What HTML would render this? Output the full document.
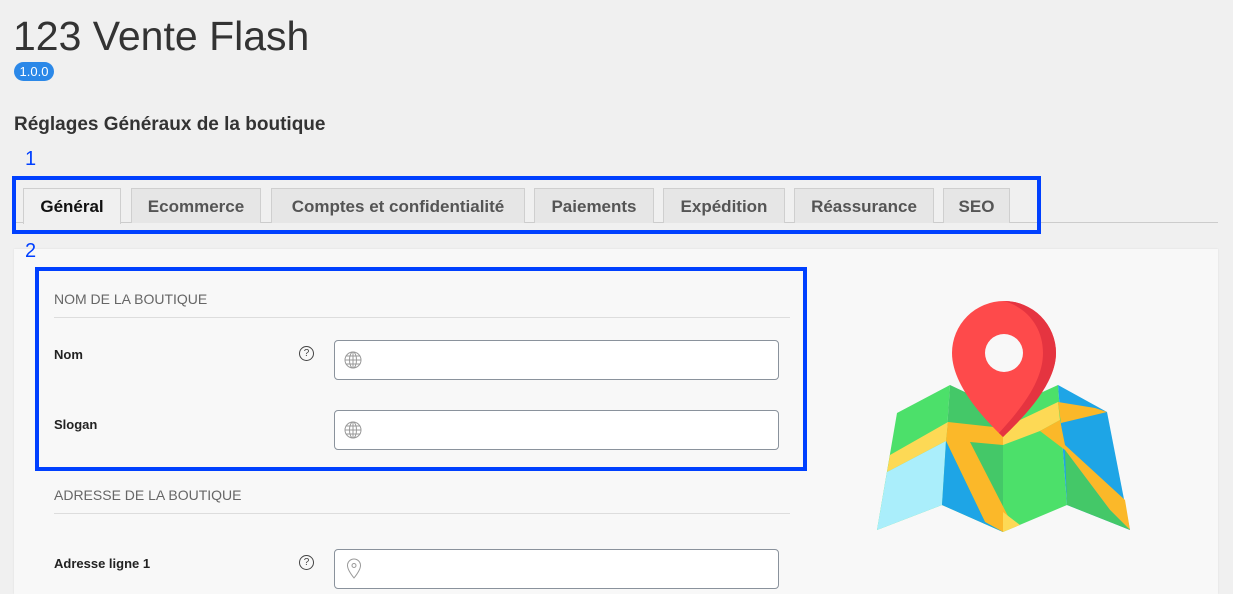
<!DOCTYPE html>
<html><head><meta charset="utf-8"><style>
*{margin:0;padding:0;box-sizing:border-box}
body{width:1233px;height:594px;overflow:hidden;background:#f0f0f0;font-family:"Liberation Sans",Helvetica,Arial,sans-serif;position:relative;color:#333}
.a{position:absolute;white-space:nowrap}
.tab{position:absolute;top:188px;height:35px;background:#e6e6e6;border:1px solid #cfcfcf;border-bottom:none;font-size:17px;font-weight:bold;color:#555;text-align:center;line-height:35px}
.inp{position:absolute;left:334px;width:445px;height:40px;background:#fff;border:1px solid #8a929c;border-radius:4px}
.lbl{position:absolute;left:54px;font-size:13px;font-weight:bold;color:#222}
.sec{position:absolute;left:54px;font-size:14px;color:#666}
.hr{position:absolute;left:54px;width:736px;height:1px;background:#ddd}
.q{position:absolute;left:299px;width:15px;height:15px;border:1px solid #444;border-radius:50%;font-size:10px;text-align:center;line-height:13px;color:#444}
</style></head><body>
<div class="a" style="left:13px;top:13px;font-size:41px;color:#333">123 Vente Flash</div>
<div class="a" style="left:14px;top:62px;width:40px;height:19px;background:#2b88e8;border-radius:10px;color:#fff;font-size:13px;line-height:19px;text-align:center">1.0.0</div>
<div class="a" style="left:14px;top:114px;font-size:19px;font-weight:bold;color:#333">Réglages Généraux de la boutique</div>
<div class="a" style="left:25px;top:148px;font-size:20px;color:#0040ff">1</div>

<div class="a" style="left:14px;top:222px;width:1204px;height:1px;background:#ccc"></div>
<div class="tab" style="left:23px;width:98px;background:#f0f0f0;color:#111;height:36px">Général</div>
<div class="tab" style="left:131px;width:130px">Ecommerce</div>
<div class="tab" style="left:271px;width:254px">Comptes et confidentialité</div>
<div class="tab" style="left:534px;width:120px">Paiements</div>
<div class="tab" style="left:663px;width:122px">Expédition</div>
<div class="tab" style="left:794px;width:140px">Réassurance</div>
<div class="tab" style="left:943px;width:67px">SEO</div>
<div class="a" style="left:12px;top:176px;width:1029px;height:58px;border:4px solid #0040ff"></div>

<div class="a" style="left:14px;top:249px;width:1204px;height:345px;background:#f8f8f8;box-shadow:0 0 2px rgba(0,0,0,.08)"></div>
<div class="a" style="left:25px;top:240px;font-size:20px;color:#0040ff">2</div>

<div class="sec" style="top:291px">NOM DE LA BOUTIQUE</div>
<div class="hr" style="top:317px"></div>
<div class="lbl" style="top:347px">Nom</div>
<div class="q" style="top:346px">?</div>
<div class="inp" style="top:340px"></div>
<div class="lbl" style="top:417px">Slogan</div>
<div class="inp" style="top:410px"></div>
<div class="sec" style="top:487px">ADRESSE DE LA BOUTIQUE</div>
<div class="hr" style="top:513px"></div>
<div class="lbl" style="top:556px">Adresse ligne 1</div>
<div class="q" style="top:555px">?</div>
<div class="inp" style="top:549px"></div>

<svg class="a" style="left:344px;top:351px" width="18" height="18" viewBox="0 0 18 18" fill="none" stroke="#999" stroke-width="1"><circle cx="9" cy="9" r="8"/><ellipse cx="9" cy="9" rx="3.5" ry="8"/><path d="M1 9h16M2.5 5h13M2.5 13h13M9 1v16"/></svg>
<svg class="a" style="left:344px;top:421px" width="18" height="18" viewBox="0 0 18 18" fill="none" stroke="#999" stroke-width="1"><circle cx="9" cy="9" r="8"/><ellipse cx="9" cy="9" rx="3.5" ry="8"/><path d="M1 9h16M2.5 5h13M2.5 13h13M9 1v16"/></svg>
<svg class="a" style="left:346px;top:558px" width="16" height="22" viewBox="0 0 16 22" fill="none" stroke="#999" stroke-width="1"><path d="M8 20C4 15 1.5 11 1.5 7.5a6.5 6.5 0 0 1 13 0C14.5 11 12 15 8 20z"/><circle cx="8" cy="7.5" r="2"/></svg>

<div class="a" style="left:35px;top:267px;width:772px;height:204px;border:4px solid #0040ff"></div>

<svg class="a" style="left:860px;top:290px" width="290" height="250" viewBox="0 0 290 250">
<polygon points="37,123 90,95 82,215 17,240" fill="#4ce06a"/>
<polygon points="90,95 143,120 143,242 82,215" fill="#44c868"/>
<polygon points="143,120 198,95 207,215 143,242" fill="#4ce06a"/>
<polygon points="198,95 247,122 270,240 207,215" fill="#1ea5e6"/>
<polygon points="30,165 88,132 86,151 27,182" fill="#fdd955"/>
<polygon points="27,182 86,151 82,215 17,240" fill="#aaeefb"/>
<polygon points="88,132 143,138 143,155 110,152 150,230 143,242 125,232 86,151" fill="#fbb829"/>
<polygon points="86,151 125,232 143,242 82,215" fill="#1ea5e6"/>
<polygon points="143,138 198,112 200,130 180,141 143,155" fill="#fdd955"/>
<polygon points="198,112 235,118 247,122 201,133" fill="#fbb829"/>
<polygon points="200,130 205,155 265,210 270,240 250,220 205,160 180,141" fill="#fbb829"/>
<polygon points="205,160 250,220 270,240 207,215" fill="#44c868"/>
<polygon points="143,222 160,235 143,242" fill="#fdd955"/>
<path d="M144 11a52 52 0 0 1 52 52c0 30-30 62-53 84C120 125 92 93 92 63a52 52 0 0 1 52-52z" fill="#fe4a4b"/>
<path d="M144 11a52 52 0 0 1 52 52c0 30-30 62-53 84l-4-4C160 120 183 92 183 63 183 38 168 18 144 11z" fill="#e53440"/>
<circle cx="144" cy="63" r="19" fill="#f8f8f8"/>
</svg>
</body></html>
